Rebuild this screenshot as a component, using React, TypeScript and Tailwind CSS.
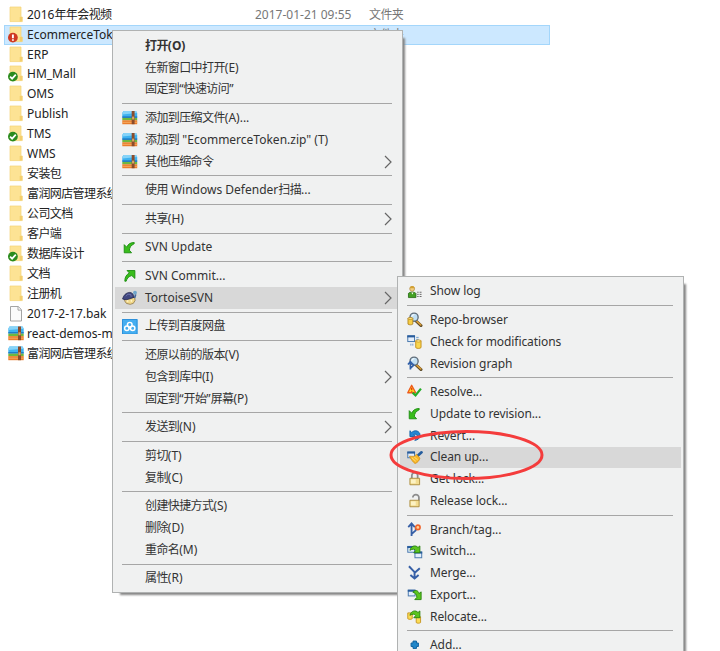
import type { ReactNode } from "react";
import clsx from "clsx";

type IconName =
  | "zip"
  | "update"
  | "commit"
  | "tortoise"
  | "baidu"
  | "log"
  | "repo"
  | "check"
  | "graph"
  | "resolve"
  | "revert"
  | "cleanup"
  | "lock"
  | "unlock"
  | "branch"
  | "switch"
  | "merge"
  | "export"
  | "relocate"
  | "add";

interface MenuEntry {
  label: string;
  icon?: IconName;
  bold?: boolean;
  submenu?: boolean;
  active?: boolean;
}

interface FileRow {
  name: string;
  kind: "folder" | "file" | "zip";
  status?: "ok" | "modified";
  date?: string;
  type?: string;
  selected?: boolean;
}

const files: FileRow[] = [
  { name: "2016年年会视频", kind: "folder", date: "2017-01-21 09:55", type: "文件夹" },
  { name: "EcommerceToken", kind: "folder", status: "modified", type: "文件夹", selected: true },
  { name: "ERP", kind: "folder" },
  { name: "HM_Mall", kind: "folder", status: "ok" },
  { name: "OMS", kind: "folder" },
  { name: "Publish", kind: "folder" },
  { name: "TMS", kind: "folder", status: "ok" },
  { name: "WMS", kind: "folder" },
  { name: "安装包", kind: "folder" },
  { name: "富润网店管理系统", kind: "folder" },
  { name: "公司文档", kind: "folder" },
  { name: "客户端", kind: "folder" },
  { name: "数据库设计", kind: "folder", status: "ok" },
  { name: "文档", kind: "folder" },
  { name: "注册机", kind: "folder" },
  { name: "2017-2-17.bak", kind: "file" },
  { name: "react-demos-master", kind: "zip" },
  { name: "富润网店管理系统", kind: "zip" },
];

const contextMenu: MenuEntry[][] = [
  [
    { label: "打开(O)", bold: true },
    { label: "在新窗口中打开(E)" },
    { label: "固定到“快速访问”" },
  ],
  [
    { label: "添加到压缩文件(A)...", icon: "zip" },
    { label: '添加到 "EcommerceToken.zip" (T)', icon: "zip" },
    { label: "其他压缩命令", icon: "zip", submenu: true },
  ],
  [{ label: "使用 Windows Defender扫描..." }],
  [{ label: "共享(H)", submenu: true }],
  [{ label: "SVN Update", icon: "update" }],
  [
    { label: "SVN Commit...", icon: "commit" },
    { label: "TortoiseSVN", icon: "tortoise", submenu: true, active: true },
  ],
  [{ label: "上传到百度网盘", icon: "baidu" }],
  [
    { label: "还原以前的版本(V)" },
    { label: "包含到库中(I)", submenu: true },
    { label: "固定到“开始”屏幕(P)" },
  ],
  [{ label: "发送到(N)", submenu: true }],
  [{ label: "剪切(T)" }, { label: "复制(C)" }],
  [{ label: "创建快捷方式(S)" }, { label: "删除(D)" }, { label: "重命名(M)" }],
  [{ label: "属性(R)" }],
];

const svnMenu: MenuEntry[][] = [
  [{ label: "Show log", icon: "log" }],
  [
    { label: "Repo-browser", icon: "repo" },
    { label: "Check for modifications", icon: "check" },
    { label: "Revision graph", icon: "graph" },
  ],
  [
    { label: "Resolve...", icon: "resolve" },
    { label: "Update to revision...", icon: "update" },
    { label: "Revert...", icon: "revert" },
    { label: "Clean up...", icon: "cleanup", active: true },
    { label: "Get lock...", icon: "lock" },
    { label: "Release lock...", icon: "unlock" },
  ],
  [
    { label: "Branch/tag...", icon: "branch" },
    { label: "Switch...", icon: "switch" },
    { label: "Merge...", icon: "merge" },
    { label: "Export...", icon: "export" },
    { label: "Relocate...", icon: "relocate" },
  ],
  [{ label: "Add...", icon: "add" }],
];

const windowShape = (x: number, y: number) => (
  <g>
    <rect x={x} y={y} width="7" height="6" fill="#e4eefb" stroke="#4878ad" />
    <path d={`M${x - 0.5} ${y + 0.7}h8`} stroke="#285c9c" strokeWidth="2" />
  </g>
);

const magnifier = (
  <g>
    <path d="M9.5 9.5l5 4.5" stroke="#5c4a28" strokeWidth="3" strokeLinecap="round" />
    <path d="M10.2 9.7l4 3.6" stroke="#d79a35" strokeWidth="1.7" strokeLinecap="round" />
    <circle cx="7.3" cy="5.4" r="4.2" fill="#b9dcf3" fillOpacity="0.85" stroke="#5f6c78" strokeWidth="1.4" />
    <path d="M4.9 5a2.6 2.6 0 0 1 2.6-2.3" stroke="#fff" fill="none" />
  </g>
);

const curvedArrow = (
  <path
    d="M3 6.5C4 2 9 .6 11.3 3.6L13.3 2v7H7l2-2.2C8 4.8 5.6 5 3 6.5z"
    fill="#5cc51d"
    stroke="#25800d"
    strokeWidth="0.9"
  />
);

const icons: Record<IconName, ReactNode> = {
  zip: (
    <>
      <path d="M.3 3.2L1.5 1h13l1.2 2.2v4.6H.3z" fill="#3eb2f0" />
      <path d="M.3 3.2L1.5 1h13l1.2 2.2-15.4 1.4z" fill="#86d3f8" />
      <path d="M.3 6.6h15.4v1.6H.3z" fill="#1c78c4" />
      <path d="M.3 8.2h15.4v2.4H.3z" fill="#6fb83e" />
      <path d="M.3 10.6h15.4v4.1H.3z" fill="#ea7d2b" />
      <path d="M.3 12.2h15.4v.9H.3z" fill="#f7b26b" />
      <path d="M10 1h3v13.7h-3z" fill="#8a4c2c" />
      <path d="M10.4 6.8h2.2v3h-2.2z" fill="#d9a763" />
    </>
  ),
  update: (
    <path
      d="M2.3 4.8v8.4h7.6L7.6 10.6c.2-2.9 1.5-5 5-6.8V2.6C8.8 2.6 6.4 4 4.9 7.4z"
      fill="#39bd1c"
      stroke="#178a0b"
      strokeWidth="0.9"
      strokeLinejoin="round"
    />
  ),
  commit: (
    <path
      d="M13.3 10.8V2.6H5.2l2.4 2.5C4.6 6.8 2.8 9.6 2.9 13.6h1.4c.8-3 2.8-5 5.8-5.8z"
      fill="#39bd1c"
      stroke="#178a0b"
      strokeWidth="0.9"
      strokeLinejoin="round"
    />
  ),
  tortoise: (
    <>
      <path d="M3 8.5l10-1.2.5 3.5-1.8 3-3.2 1-4-1-1.8-2.6z" fill="#f1d88a" stroke="#8d7340" strokeWidth="0.8" />
      <path d="M.6 9.3C1.5 5.4 4 2.9 7.6 2.5c3.2 0 4.6 2.4 4.9 5-3.5 1.5-6 2-6.5 2.3-2 .3-3.8.3-5.4-.5z" fill="#41477f" stroke="#22264c" strokeWidth="0.8" />
      <path d="M4 6.5l2-2.2 3 .4.5 2.3" stroke="#7c86bd" strokeWidth="0.7" fill="none" />
      <circle cx="13.4" cy="2.9" r="2" fill="#6fa6cc" />
      <path d="M14.2 4.6l-1.2 3.6" stroke="#41679b" strokeWidth="1.6" />
      <path d="M5 11.4h1.6M9 11.2h1.4" stroke="#fff6cf" strokeWidth="1.6" />
    </>
  ),
  baidu: (
    <>
      <path d="M0 0h16v16H0z" fill="#45aef0" />
      <path d="M.5 .5h15v15H.5z" fill="none" stroke="#2d90da" />
      <circle cx="8" cy="5.9" r="2.4" fill="none" stroke="#fff" strokeWidth="1.5" />
      <circle cx="5" cy="9.5" r="2.3" fill="none" stroke="#fff" strokeWidth="1.5" />
      <circle cx="11" cy="9.5" r="2.3" fill="none" stroke="#fff" strokeWidth="1.5" />
      <path d="M6.5 8.2l3 2.8" stroke="#fff" strokeWidth="1.3" />
    </>
  ),
  log: (
    <>
      <circle cx="5.3" cy="5" r="2.5" fill="#f2cf83" stroke="#ad7e2e" strokeWidth="0.7" />
      <path d="M2.9 4.3c.2-3 4.8-3 5 0z" fill="#d3a132" />
      <path d="M1.5 14V9.8C2 8 8.6 8 9.2 9.8V14z" fill="#43a022" stroke="#21620f" strokeWidth="0.8" />
      <path d="M4.5 8.8l1 2 1.1-2z" fill="#fff" />
      <path d="M10.5 8.5h1.5m1 0h2M10.5 10.7h1.5m1 0h2M10.5 12.9h1.5m1 0h2" stroke="#666" />
    </>
  ),
  repo: (
    <>
      {magnifier}
      <path d="M1 6.5h5v6c-1.2 1-3.8 1-5 0z" fill="#f6cd45" stroke="#aa7a10" strokeWidth="0.8" />
      <ellipse cx="3.5" cy="6.6" rx="2.5" ry="1" fill="#ffe994" stroke="#aa7a10" strokeWidth="0.7" />
    </>
  ),
  check: (
    <>
      {windowShape(0.8, 1.8)}
      <path d="M9.5 3.5H12M9.5 5.5H12M4 10v2M6 10v2" stroke="#6c9ccc" />
      <path d="M9 7h5.5v7c-1 1.2-4.5 1.2-5.5 0z" fill="#f9d64f" stroke="#c18a11" strokeWidth="0.9" />
      <ellipse cx="11.8" cy="7.2" rx="2.7" ry="1.1" fill="#fff1a6" stroke="#c18a11" strokeWidth="0.7" />
    </>
  ),
  graph: (
    <>
      {magnifier}
      <path d="M3.5 14V6.5M1 8.7l2.5-2.9L6 8.5M3.7 12.5l3-2.8V8" stroke="#305fa8" strokeWidth="1.7" fill="none" />
    </>
  ),
  resolve: (
    <>
      <path d="M4.8 1.3L9 9H.8z" fill="#ffd91e" stroke="#ee5a1c" strokeWidth="1.4" strokeLinejoin="round" />
      <path d="M4.9 3.8v2.5M4.9 7v1" stroke="#d92610" strokeWidth="1.2" />
      <path d="M5.8 9l3 2.8 5.6-7" stroke="#24ad27" strokeWidth="2.3" fill="none" />
    </>
  ),
  revert: (
    <path
      d="M3 2.8v6h6L7 6.8c1.6-1 3.6-.4 3.6 1.8 0 1.6-.9 3-2.6 4.2 3.3-.3 5.5-2.3 5.5-5.2 0-4.6-5.4-6.3-8.6-3z"
      fill="#2687d3"
      stroke="#115da4"
      strokeWidth="0.9"
    />
  ),
  cleanup: (
    <>
      {windowShape(0.8, 2)}
      <path d="M15 2.4l-4 3.6" stroke="#245c9d" strokeWidth="2.8" strokeLinecap="round" />
      <path d="M2.5 6.4l5 .2L9.8 4.4l3.5 4c-.6 2.5-2.4 4.6-5 5.6C6.6 12.8 4.2 10 2.5 6.4z" fill="#f8b728" stroke="#d08f1c" strokeWidth="0.8" />
      <path d="M5 8l4 3.6M7.4 7.2l3.6 3" stroke="#ffe080" />
    </>
  ),
  lock: (
    <>
      <path d="M5 8V4.7c0-4 6-4 6 0V8" fill="none" stroke="#8d8d8d" strokeWidth="1.8" />
      <path d="M3 7.5h10v6.7H3z" fill="#f3dd92" stroke="#a88836" strokeWidth="0.9" />
      <path d="M4 8.7h5v4H4z" fill="#fcf2c4" />
    </>
  ),
  unlock: (
    <>
      <path d="M6 4.7c0-4 6.3-4 6.3 0V8" fill="none" stroke="#8d8d8d" strokeWidth="1.8" />
      <path d="M3 7.5h9.5v6.7H3z" fill="#f3dd92" stroke="#a88836" strokeWidth="0.9" />
      <path d="M4 8.7h5v4H4z" fill="#fcf2c4" />
    </>
  ),
  branch: (
    <>
      <path d="M4.7 14.5V2.5M1.3 5.2L4.7 1.5l3.3 3.7M4.7 12.5L9 8.7V5.8" stroke="#365fa6" strokeWidth="1.9" fill="none" />
      <circle cx="11.2" cy="5.6" r="2.3" fill="#ffd196" stroke="#f0632a" strokeWidth="1.7" />
    </>
  ),
  switch: (
    <>
      {windowShape(0.8, 2.5)}
      {windowShape(8.2, 8.2)}
      {curvedArrow}
    </>
  ),
  merge: (
    <path d="M2 1.3l5.8 6v6M13.2 3.3L8 8M3.5 10.3L7.8 14l4.2-3.7" stroke="#365fa6" strokeWidth="2" fill="none" />
  ),
  export: (
    <>
      {windowShape(1.3, 3.2)}
      <path d="M6 5.3c2.5-2.8 5.4-2 6.5 1.4L14.6 5v8H8l2.2-2.3C10 7.6 8.4 6 6 5.3z" fill="#5bc51d" stroke="#25800d" strokeWidth="0.9" />
    </>
  ),
  relocate: (
    <>
      <path d="M.8 4h4.6v6c-1 .9-3.6.9-4.6 0zM9.5 8H14v6c-1 .9-3.6.9-4.5 0z" fill="#fbdc55" stroke="#c4921b" strokeWidth="0.9" />
      {curvedArrow}
    </>
  ),
  add: (
    <path d="M6.2 4.2h3.6v2h2v3.6h-2v2H6.2v-2h-2V6.2h2z" fill="#2187c9" stroke="#1263a0" strokeLinejoin="round" />
  ),
};

function Icon({ name }: { name: IconName }) {
  return (
    <svg viewBox="0 0 16 16" className="size-[15.5px]">
      {icons[name]}
    </svg>
  );
}

// Chinese runs are set slightly tighter than the Latin ones
function Label({ text }: { text: string }) {
  return (
    <span className="whitespace-pre">
      {text.split(/([\u4e00-\u9fff]+)/).map((part, i) =>
        i % 2 ? (
          <span key={i} className="tracking-[-0.6px]">
            {part}
          </span>
        ) : (
          part
        ),
      )}
    </span>
  );
}

function FileIcon({ kind, status }: Pick<FileRow, "kind" | "status">) {
  return (
    <svg viewBox="0 0 16 18" className="h-[18px] w-4 shrink-0">
      {kind === "folder" && (
        <>
          <path d="M2 1h11v14.6H2z" fill="#fde394" />
          <path d="M2 1h11v10h1.3v4.6H2z" fill="none" stroke="#f3d276" strokeWidth="0.7" />
          <path d="M11.7 11h2.6v4.6h-2.6z" fill="#f4cf6c" />
        </>
      )}
      {kind === "file" && (
        <path d="M2.5 1.5h7.8l3.2 3.2v11.3h-11zM10 1.8v3.3h3.3" fill="#fbfbfb" stroke="#9a9a9a" strokeWidth="0.9" />
      )}
      {kind === "zip" && <g transform="translate(0 .5)">{icons.zip}</g>}
      {status === "ok" && (
        <>
          <circle cx="4.9" cy="11.6" r="4.9" fill="#2b8b1d" />
          <path d="M2.1 11.7l2 2 3.7-4" stroke="#fff" strokeWidth="1.7" fill="none" />
        </>
      )}
      {status === "modified" && (
        <>
          <circle cx="4.9" cy="11.6" r="4.9" fill="#cf3a23" />
          <path d="M4.9 8.4v3.8M4.9 13.2v1.6" stroke="#fff" strokeWidth="1.9" />
        </>
      )}
    </svg>
  );
}

function FileList() {
  return (
    <div className="w-[546px] pt-[4.6px]">
      {files.map((file, i) => (
        <div
          key={i}
          className={clsx(
            "flex h-[19.98px] items-center pl-1",
            file.selected && "bg-[#cce8ff] outline outline-[#a3d6fb] -outline-offset-1",
          )}
        >
          <FileIcon kind={file.kind} status={file.status} />
          <div className="w-[231px] pl-[3px] text-[#222]">
            <Label text={file.name} />
          </div>
          <div className="w-[114px] text-[#777]">{file.date}</div>
          <div className="text-[#777]">{file.type && <Label text={file.type} />}</div>
        </div>
      ))}
    </div>
  );
}

function Menu({ groups, className }: { groups: MenuEntry[][]; className: string }) {
  return (
    <div
      className={clsx(
        "absolute border border-[#b0b2b2] bg-[#f0f1f1] px-0.5 pt-[4px] pb-[3px] shadow-[5px_5px_2px_-3px_#858585]",
        className,
      )}
    >
      {groups.map((group, i) => (
        <div key={i}>
          {i > 0 && (
            <div className="flex h-[6.9px] items-center pr-2 pl-[7px]">
              <div className="h-px w-full bg-[#a6a6a6]" />
            </div>
          )}
          {group.map((item) => (
            <div
              key={item.label}
              className={clsx(
                "flex h-[21.75px] items-center pr-2 pl-[7px]",
                item.active && "bg-[#d8d8d8]",
                item.bold && "font-bold",
              )}
            >
              <div className="mr-[7px] flex w-4 shrink-0">
                {item.icon && <Icon name={item.icon} />}
              </div>
              <Label text={item.label} />
              {item.submenu && (
                <svg viewBox="0 0 8 14" className="ml-auto h-3.5 w-2">
                  <path d="M1 1l6 6-6 6" fill="none" stroke="#666" strokeWidth="1.2" />
                </svg>
              )}
            </div>
          ))}
        </div>
      ))}
    </div>
  );
}

export default function App() {
  return (
    <div className="relative h-[651px] w-[720px] overflow-hidden bg-white pl-1 font-['Noto_Sans','Noto_Sans_CJK_SC',sans-serif] text-[12px] leading-5 text-[#333]">
      <FileList />
      <Menu groups={contextMenu} className="top-[30px] left-[112px] w-[291px]" />
      <Menu groups={svnMenu} className="top-[275.5px] left-[397px] w-[287px] tracking-[-0.08px]" />
      <svg viewBox="0 0 156 52" className="absolute top-[429px] left-[389px] h-[52px] w-[156px]">
        <ellipse cx="77.5" cy="26" rx="75.5" ry="23.5" fill="none" stroke="#f43c3c" strokeWidth="3" />
      </svg>
    </div>
  );
}
